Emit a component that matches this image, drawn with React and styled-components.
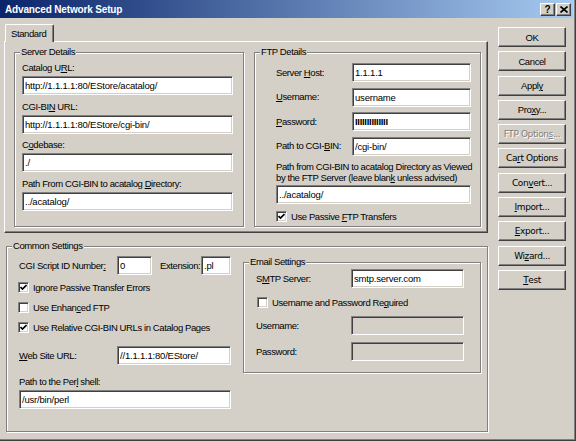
import React from "react";
import styled, { createGlobalStyle } from "styled-components";

const GlobalStyle = createGlobalStyle`
  html, body {
    margin: 0;
    padding: 0;
    background: #d4d0c8;
  }
  body {
    font-family: "Liberation Sans", Arial, sans-serif;
    font-size: 9.5px;
    letter-spacing: -0.4px;
    color: #000;
  }
`;

const CheckMark = () => (
  <svg width="7" height="7" viewBox="0 0 7 7">
    <path d="M0.5 3 L2.5 5 L6.5 1" fill="none" stroke="#000" strokeWidth="1.7" />
  </svg>
);

const CloseGlyph = () => (
  <svg width="8" height="7" viewBox="0 0 8 7">
    <path d="M0.5 0.5 L7.5 6.5 M7.5 0.5 L0.5 6.5" stroke="#000" strokeWidth="1.6" />
  </svg>
);

const GroupBox = ({ legend, className, children }) => (
  <Frame className={className}>
    <Legend>{legend}</Legend>
    {children}
  </Frame>
);

const Check = ({ checked, indent = 0, children }) => (
  <CheckRow $indent={indent}>
    <Box>{checked && <CheckMark />}</Box>
    <span>{children}</span>
  </CheckRow>
);

const buttons = [
  { label: "OK" },
  { label: "Cancel" },
  { label: <>Appl<u>y</u></> },
  { label: <>Pro<u>x</u>y...</> },
  { label: <>FTP Option<u>s</u>...</>, wide: true, off: true },
  { label: <>Ca<u>r</u>t Options</>, wide: true },
  { label: <>Con<u>v</u>ert...</>, wide: true },
  { label: <><u>I</u>mport...</>, wide: true },
  { label: <><u>E</u>xport...</>, wide: true },
  { label: <>Wi<u>z</u>ard...</>, wide: true },
  { label: <><u>T</u>est</>, wide: true },
];

const App = () => {
  return (
    <>
      <GlobalStyle />
      <Window>
        <TitleBar>
          <Title>Advanced Network Setup</Title>
          <TitleButtons>
            <TitleButton>?</TitleButton>
            <TitleButton>
              <CloseGlyph />
            </TitleButton>
          </TitleButtons>
        </TitleBar>
        <Body>
          <Main>
            <TabStrip>
              <Tab>Standard</Tab>
            </TabStrip>
            <TabPanel>
              <ServerGroup legend="Server Details">
                <Label $above>Catalog U<u>R</u>L:</Label>
                <Field readOnly value="http://1.1.1.1:80/EStore/acatalog/" />
                <Label $above $top={5.5}>CGI-BI<u>N</u> URL:</Label>
                <Field readOnly value="http://1.1.1.1:80/EStore/cgi-bin/" />
                <Label $above $top={5.5}>C<u>o</u>debase:</Label>
                <Field readOnly value="./" />
                <Label $above $top={5.5}>Path From CGI-BIN to acatalog <u>D</u>irectory:</Label>
                <Field readOnly value="../acatalog/" />
              </ServerGroup>
              <FtpGroup legend="FTP Details">
                <FormGrid $label={76} $field={119}>
                  <Label>Server <u>H</u>ost:</Label>
                  <Field readOnly value="1.1.1.1" />
                  <Label><u>U</u>sername:</Label>
                  <Field readOnly value="username" />
                  <Label><u>P</u>assword:</Label>
                  <Field readOnly value="IIIIIIIIIIIIII" $secret />
                  <Label>Path to CGI-<u>B</u>IN:</Label>
                  <Field readOnly value="/cgi-bin/" />
                </FormGrid>
                <NoteLabel>
                  Path from CGI-BIN to acatalog Directory as Viewed
                  <br />
                  by the FTP Server (leave blan<u>k</u> unless advised)
                </NoteLabel>
                <Field readOnly value="../acatalog/" $w={195} />
                <CheckSpacer>
                  <Check checked>
                    Use Passive <u>F</u>TP Transfers
                  </Check>
                </CheckSpacer>
              </FtpGroup>
            </TabPanel>
            <CommonGroup legend="Common Settings">
              <CommonLeft>
                <InlineRow>
                  <Label $w={98}>CGI Script ID Number<u>:</u></Label>
                  <Field readOnly value="0" $w={35} />
                  <Label $w={41} $lead={8}>Extension:</Label>
                  <Field readOnly value=".pl" $w={30} />
                </InlineRow>
                <CheckList>
                  <Check checked indent={-1}>
                    Ignore Passive Transfer Errors
                  </Check>
                  <Check indent={-1}>
                    Use Enhan<u>c</u>ed FTP
                  </Check>
                  <Check checked indent={-1}>
                    Use Relative CGI-BIN URLs in Catalog Pages
                  </Check>
                </CheckList>
                <InlineRow $top={11.5}>
                  <Label $w={98}><u>W</u>eb Site URL:</Label>
                  <Field readOnly value="//1.1.1.1:80/EStore/" $w={114} />
                </InlineRow>
                <Label $above $top={11}>Path to the Per<u>l</u> shell:</Label>
                <Field readOnly value="/usr/bin/perl" />
              </CommonLeft>
              <EmailGroup legend="Email Settings">
                <FormGrid $label={95} $field={113}>
                  <Label>S<u>M</u>TP Server:</Label>
                  <Field readOnly value="smtp.server.com" />
                </FormGrid>
                <EmailCheck>
                  <Check indent={1}>
                    Username and Password Re<u>q</u>uired
                  </Check>
                </EmailCheck>
                <FormGrid $label={95} $field={113} $gap={7}>
                  <Label>Username:</Label>
                  <Field readOnly value="" $off />
                  <Label>Password:</Label>
                  <Field readOnly value="" $off />
                </FormGrid>
              </EmailGroup>
            </CommonGroup>
          </Main>
          <ButtonColumn>
            {buttons.map((b, i) => (
              <PushButton key={i} $wide={b.wide} $off={b.off}>
                {b.label}
              </PushButton>
            ))}
          </ButtonColumn>
        </Body>
      </Window>
    </>
  );
};

const raised = `
  border: 1px solid;
  border-color: #fff #404040 #404040 #fff;
  box-shadow: inset -1px -1px 0 #808080;
`;

const sunken = `
  border: 1px solid;
  border-color: #808080 #fff #fff #808080;
  box-shadow: inset 1px 1px 0 #404040, inset -1px -1px 0 #d4d0c8;
`;

const Window = styled.div`
  width: 576px;
  height: 441px;
  box-sizing: border-box;
  background: #d4d0c8;
  border-right: 1px solid #404040;
  border-bottom: 1px solid #404040;
  box-shadow: inset -1px -1px 0 #808080;
  display: flex;
  flex-direction: column;
  overflow: hidden;
`;

const TitleBar = styled.div`
  height: 18px;
  margin-right: 2px;
  padding: 0 2px 0 5px;
  display: flex;
  align-items: center;
  justify-content: space-between;
  background: linear-gradient(to right, #0a246a, #a6caf0);
`;

const Title = styled.div`
  color: #fff;
  font-weight: bold;
  font-size: 10px;
  letter-spacing: -0.15px;
`;

const TitleButtons = styled.div`
  display: flex;
  gap: 1px;
`;

const TitleButton = styled.div`
  box-sizing: border-box;
  width: 15px;
  height: 13px;
  ${raised}
  background: #d4d0c8;
  display: flex;
  align-items: center;
  justify-content: center;
  font-weight: bold;
  font-size: 10px;
  letter-spacing: 0;
`;

const Body = styled.div`
  display: flex;
  padding: 6px 0 0 4px;
`;

const Main = styled.div`
  width: 484px;
  display: flex;
  flex-direction: column;
`;

const TabStrip = styled.div`
  height: 17px;
  display: flex;
`;

const Tab = styled.div`
  position: relative;
  z-index: 1;
  box-sizing: border-box;
  margin-left: 1px;
  width: 49px;
  height: 18px;
  padding: 3px 0 0 5px;
  border: 1px solid;
  border-color: #fff #404040 transparent #fff;
  border-bottom: none;
  border-radius: 2px 2px 0 0;
  box-shadow: inset -1px 0 0 #808080;
  background: #d4d0c8;
  line-height: 12px;
`;

const TabPanel = styled.div`
  box-sizing: border-box;
  height: 192px;
  padding: 10px 6px 5px 9px;
  display: flex;
  gap: 10px;
  ${raised}
`;

const Frame = styled.div`
  position: relative;
  box-sizing: border-box;
  border: 1px solid #808080;
  box-shadow: inset 1px 1px 0 #fff, 1px 1px 0 #fff;
`;

const Legend = styled.span`
  position: absolute;
  top: -7px;
  left: 5px;
  padding: 0 1px;
  line-height: 12px;
  background: #d4d0c8;
`;

const ServerGroup = styled(GroupBox)`
  width: 230px;
  padding: 9px 10px 0 7px;
`;

const FtpGroup = styled(GroupBox)`
  flex: 1;
  padding: 10px 0 0 21px;
`;

const CommonGroup = styled(GroupBox)`
  margin: 13px 0 0 2px;
  height: 186px;
  padding: 9px 6px 0 12px;
  display: flex;
  align-items: flex-start;
  gap: 12px;
`;

const EmailGroup = styled(GroupBox)`
  width: 238px;
  margin-top: 6px;
  padding: 6px 0 11px 12px;
`;

const CommonLeft = styled.div`
  width: 212px;
  display: flex;
  flex-direction: column;
`;

const Label = styled.div`
  line-height: 12px;
  white-space: nowrap;
  ${(p) => (p.$w ? `width: ${p.$w}px; flex: none;` : "")}
  margin-top: ${(p) => p.$top || 0}px;
  margin-bottom: ${(p) => (p.$above ? 2 : 0)}px;
  margin-left: ${(p) => p.$lead || 0}px;
`;

const NoteLabel = styled.div`
  margin-top: 5px;
  margin-bottom: 2.5px;
  line-height: 11px;
  white-space: nowrap;
`;

const Field = styled.input`
  box-sizing: border-box;
  display: block;
  width: ${(p) => (p.$w ? `${p.$w}px` : "100%")};
  height: 19px;
  margin: 0;
  padding: 0 2px;
  ${sunken}
  background: ${(p) => (p.$off ? "#d4d0c8" : "#fff")};
  font-family: "Liberation Sans", Arial, sans-serif;
  font-size: 9.5px;
  font-weight: ${(p) => (p.$secret ? "bold" : "normal")};
  letter-spacing: ${(p) => (p.$secret ? "-0.3px" : "-0.2px")};
  color: #000;
  outline: none;
  flex: none;
`;

const FormGrid = styled.div`
  display: grid;
  grid-template-columns: ${(p) => p.$label}px ${(p) => p.$field}px;
  row-gap: ${(p) => p.$gap || 5.5}px;
  align-items: center;
`;

const InlineRow = styled.div`
  display: flex;
  align-items: center;
  margin-top: ${(p) => p.$top || 0}px;
`;

const CheckList = styled.div`
  display: flex;
  flex-direction: column;
  gap: 6px;
  margin-top: 5.5px;
`;

const CheckSpacer = styled.div`
  margin-top: 5.5px;
`;

const EmailCheck = styled.div`
  margin: 7px 0;
`;

const CheckRow = styled.div`
  display: flex;
  align-items: center;
  gap: 4px;
  height: 14px;
  margin-left: ${(p) => p.$indent}px;
  white-space: nowrap;
`;

const Box = styled.span`
  box-sizing: border-box;
  width: 11px;
  height: 11px;
  flex: none;
  ${sunken}
  background: #fff;
  display: flex;
  align-items: center;
  justify-content: center;
`;

const ButtonColumn = styled.div`
  margin: 3px 0 0 10px;
  display: flex;
  flex-direction: column;
  gap: 4.3px;
`;

const PushButton = styled.div`
  box-sizing: border-box;
  width: 68px;
  height: 20px;
  ${raised}
  background: #d4d0c8;
  display: flex;
  align-items: center;
  justify-content: center;
  white-space: nowrap;
  font-family: ${(p) =>
    p.$wide ? '"DejaVu Sans", Verdana, sans-serif' : '"Liberation Sans", Arial, sans-serif'};
  font-size: ${(p) => (p.$wide ? 9 : 9.5)}px;
  color: ${(p) => (p.$off ? "#808080" : "#000")};
  text-shadow: ${(p) => (p.$off ? "1px 1px 0 #fff" : "none")};
`;

export default App;
